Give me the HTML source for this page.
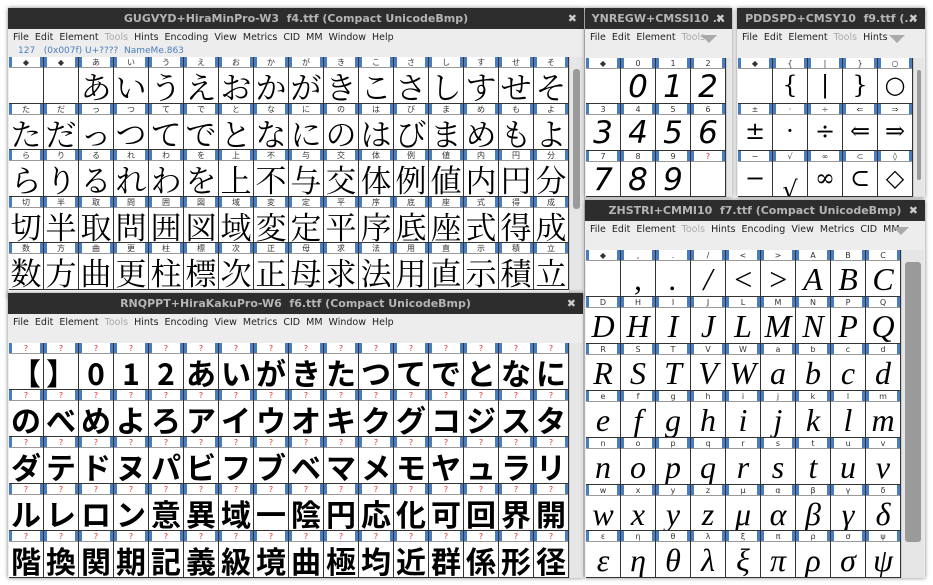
<!DOCTYPE html>
<html><head><meta charset="utf-8">
<style>
*{margin:0;padding:0;box-sizing:border-box}
body{width:933px;height:585px;background:#fff;position:relative;overflow:hidden;font-family:"Liberation Sans","DejaVu Sans",sans-serif}
.win{position:absolute;background:#ededed;box-shadow:0 0 4px rgba(0,0,0,.5);overflow:hidden}
.tb{position:absolute;left:0;right:0;top:0;height:21px;background:#2d2d2d;color:#b5b5b5;font:bold 11px "DejaVu Sans",sans-serif;text-align:center;line-height:21px;white-space:nowrap}
.tb .x{position:absolute;right:7px;top:0;color:#ccc;font-size:11px}
.mb{position:absolute;left:5px;top:24px;font:9.5px "DejaVu Sans",sans-serif;color:#222;white-space:nowrap;word-spacing:0}
.mb span{margin-right:6px}
.mb .d{color:#aaa}
.info{position:absolute;left:10px;top:38px;font:9px "DejaVu Sans",sans-serif;color:#4a7dbf;white-space:nowrap}
.grid{position:absolute;background:#fff;overflow:hidden}
.cell{position:absolute;border-right:1px solid #333;border-bottom:1px solid #333}
.lab{position:absolute;left:0;right:0;top:0;height:11px;border-bottom:1px solid #999;font:8px "DejaVu Sans",sans-serif;text-align:center;line-height:11px;color:#333;overflow:hidden}
.lab:before,.lab:after{content:"";position:absolute;top:0;width:3px;height:10px;background:#4a7dbf}
.lab:before{left:0}.lab:after{right:0}
.g{position:absolute;left:0;right:0;top:11px;bottom:0;text-align:center;overflow:hidden;white-space:nowrap}
.sb{position:absolute;background:#e6e6e6;border-left:1px solid #ccc}
.sb i{position:absolute;left:3px;right:3px;background:#9a9a9a;border-radius:3px}
.tri{position:absolute;width:0;height:0;border-left:8px solid transparent;border-right:8px solid transparent;border-top:8px solid #aaa}
</style></head><body>
<div id="root"></div>
<script>
function win(o){
 var w=document.createElement('div');w.className='win';
 w.style.cssText+='left:'+o.x+'px;top:'+o.y+'px;width:'+o.w+'px;height:'+o.h+'px;z-index:'+(o.z||1);
 var h='<div class="tb">'+o.title+'<span class="x">✖</span></div><div class="mb">';
 o.menu.forEach(function(m){h+='<span'+(m=='Tools'?' class="d"':'')+'>'+m+'</span>'});
 h+='</div>';
 if(o.tri)h+='<div class="tri" style="left:'+o.tri+'px;top:27px"></div>';
 if(o.info)h+='<div class="info">'+o.info+'</div>';
 var gw=o.cols*35;
 h+='<div class="grid" style="left:1px;top:'+o.gt+'px;width:'+gw+'px;height:'+(o.h-o.gt)+'px">';
 for(var r=0;r<o.rows.length;r++){
  var L=o.labs[r],G=o.rows[r];
  for(var c=0;c<o.cols;c++){
   var lt=L[c]||'',gt=G[c]||'';
   var top=Math.round(r*o.rh);
   var lc=o.lc||'#333';
   if(lt=='?')lc='#e03030';
   h+='<div class="cell" style="left:'+(c*35)+'px;top:'+top+'px;width:35px;height:'+(Math.round((r+1)*o.rh)-top)+'px"><div class="lab" style="color:'+lc+'">'+lt+'</div><div class="g" style="'+o.gs+'">'+gt+'</div></div>';
  }
 }
 h+='</div>';
 h+='<div class="sb" style="left:'+(gw+1)+'px;top:'+o.gt+'px;width:'+(o.w-gw-2)+'px;bottom:0"><i style="top:12px;height:'+o.sbh+'px"></i></div>';
 w.innerHTML=h;document.getElementById('root').appendChild(w);
}
function s(x){return Array.from(x)}
var full=['File','Edit','Element','Tools','Hints','Encoding','View','Metrics','CID','MM','Window','Help'];
var r1=[s('  あいうえおかがきこさしすせそ'),s('ただっつてでとなにのはびまめもよ'),s('らりるれわを上不与交体例値内円分'),s('切半取問囲図域変定平序底座式得成'),s('数方曲更柱標次正母求法用直示積立')];
var l1=r1.map(function(a){return a.slice()});l1[0][0]='◆';l1[0][1]='◆';
win({x:8,y:8,w:576,h:290,z:1,title:'GUGVYD+HiraMinPro-W3&nbsp; f4.ttf (Compact UnicodeBmp)',menu:full,info:'127&nbsp;&nbsp; (0x007f) U+???? &nbsp;NameMe.863',gt:49,cols:16,rh:46.6,rows:r1,labs:l1,sbh:140,gs:"font:31px/35px 'Noto Serif CJK JP',serif;color:#000"});
var r2=[s('【】012あいがきたつてでとなに'),s('のべめよろアイウオキクグコジスタ'),s('ダテドヌパビフブベマメモヤュラリ'),s('ルレロン意異域一陰円応化可回界開'),s('階換関期記義級境曲極均近群係形径')];
var l2=r2.map(function(a){return a.map(function(){return '?'})});
win({x:8,y:293,w:575,h:285,z:2,title:'RNQPPT+HiraKakuPro-W6&nbsp; f6.ttf (Compact UnicodeBmp)',menu:full,gt:50,cols:16,rh:47,rows:r2,labs:l2,sbh:0,gs:"font:bold 30px/36px 'Noto Sans CJK JP',sans-serif;color:#000"});
win({x:585,y:8,w:147,h:189,z:1,title:'YNREGW+CMSSI10 ...',menu:['File','Edit','Element','Tools'],tri:116,gt:50,cols:4,rh:46.3,rows:[['','0','1','2'],['3','4','5','6'],['7','8','9','']],labs:[['◆','0','1','2'],['3','4','5','6'],['7','8','9','?']],sbh:110,gs:"font:italic 31px/36px 'DejaVu Sans',sans-serif;color:#000"});
win({x:737,y:8,w:188,h:189,z:1,title:'PDDSPD+CMSY10&nbsp; f9.ttf (...',menu:['File','Edit','Element','Tools','Hints'],tri:152,gt:50,cols:5,rh:46.3,rows:[['','{','|','}','○'],['±','·','÷','⇐','⇒'],['−','<span style=\'position:relative;top:12px\'>√</span>','∞','⊂','◇']],labs:[['◆','{','|','}','○'],['±','·','÷','⇐','⇒'],['−','√','∞','⊂','◊']],sbh:110,gs:"font:24px/32px 'DejaVu Serif',serif;color:#000"});
var m=[['',',','.','/','&lt;','&gt;','A','B','C'],s('DHIJLMNPQ'),s('RSTVWabcd'),s('efghijklm'),s('nopqrstuv'),s('wxyzμαβγδ'),s('εηθλξπρσψ')];
var ml=m.map(function(a){return a.slice()});ml[0][0]='◆';
win({x:585,y:200,w:340,h:378,z:3,title:'ZHSTRI+CMMI10&nbsp; f7.ttf (Compact UnicodeBmp)',menu:['File','Edit','Element','Tools','Hints','Encoding','View','Metrics','CID','MM'],tri:308,gt:50,cols:9,rh:46.9,rows:m,labs:ml,sbh:280,gs:"font:italic 32px/36px 'Liberation Serif','DejaVu Serif',serif;color:#000"});
</script>
</body></html>
